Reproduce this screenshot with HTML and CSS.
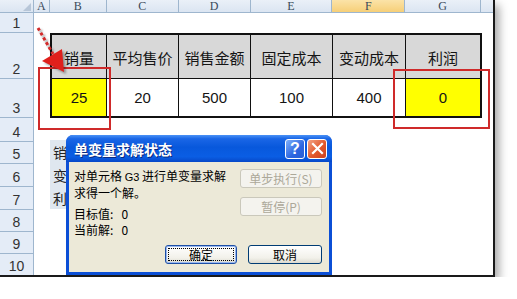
FILE: index.html
```html
<!DOCTYPE html>
<html lang="zh-CN">
<head>
    <meta charset="UTF-8">
    <meta name="viewport" content="width=device-width, initial-scale=1.0">
    <title>单变量求解状态</title>
    <link rel="stylesheet" href="styles.css">
</head>
<body>
    <div class="sheet">
        <div class="colbar">
            <div class="corner"><span class="tri"></span></div>
            <div class="col w-a">A</div>
            <div class="col w-b">B</div>
            <div class="col w-c">C</div>
            <div class="col w-d">D</div>
            <div class="col w-e">E</div>
            <div class="col w-f active">F</div>
            <div class="col w-g">G</div>
            <div class="col w-h"></div>
        </div>

        <div class="body">
            <div class="rowbar">
                <div class="rh h1">1</div>
                <div class="rh h2">2</div>
                <div class="rh h3">3</div>
                <div class="rh h4">4</div>
                <div class="rh h5">5</div>
                <div class="rh h6">6</div>
                <div class="rh h7">7</div>
                <div class="rh h8">8</div>
                <div class="rh h9">9</div>
                <div class="rh h10">10</div>
            </div>

            <div class="cells">
                <div class="data">
                    <div class="th">销量</div>
                    <div class="th">平均售价</div>
                    <div class="th">销售金额</div>
                    <div class="th">固定成本</div>
                    <div class="th">变动成本</div>
                    <div class="th last">利润</div>
                    <div class="td hl">25</div>
                    <div class="td">20</div>
                    <div class="td">500</div>
                    <div class="td">100</div>
                    <div class="td">400</div>
                    <div class="td hl last">0</div>
                </div>

                <div class="note">
                    <p>销</p>
                    <p>变</p>
                    <p>利</p>
                </div>
            </div>
        </div>

        <div class="mark mark-b"></div>
        <div class="mark mark-g"></div>

        <svg class="arrow" width="80" height="80" viewBox="0 0 80 80">
            <line x1="38" y1="28" x2="53" y2="54" stroke="#d22a2a" stroke-width="3" stroke-dasharray="3 2.5"/>
            <polygon points="64,72 42,61 62,49" fill="#e0201c"/>
        </svg>

        <div class="dialog">
            <div class="titlebar">
                <span class="title">单变量求解状态</span>
                <span class="tbtn help">?</span>
                <span class="tbtn close">
                    <svg width="13" height="13" viewBox="0 0 13 13"><path d="M2 2 L11 11 M11 2 L2 11" stroke="#fff" stroke-width="2.2" stroke-linecap="square"/></svg>
                </span>
            </div>
            <div class="dbody">
                <div class="dtop">
                    <div class="msg">
                        <p>对单元格 <span class="ref">G3</span> 进行单变量求解</p>
                        <p>求得一个解。</p>
                        <p class="val first">目标值:&nbsp;&nbsp; 0</p>
                        <p class="val">当前解:&nbsp;&nbsp; 0</p>
                    </div>
                    <div class="side">
                        <button class="btn" disabled>单步执行(S)</button>
                        <button class="btn" disabled>暂停(P)</button>
                    </div>
                </div>
                <div class="dfoot">
                    <button class="btn default">确定</button>
                    <button class="btn cancel">取消</button>
                </div>
            </div>
        </div>
    </div>
</body>
</html>
```

FILE: styles.css
```css
* {
    box-sizing: border-box;
}
body {
    margin: 0;
    background: #fff;
    font-family: "Liberation Sans", "Noto Sans CJK SC", sans-serif;
}
p {
    margin: 0;
}

.sheet {
    position: relative;
    width: 495px;
    height: 277px;
    background: #fff;
    border-right: 2px solid #1a1a1a;
    border-bottom: 2px solid #1a1a1a;
    box-shadow: 4px 5px 9px rgba(0, 0, 0, 0.35);
    overflow: hidden;
}

/* column headers */
.colbar {
    display: flex;
    height: 13px;
    background: linear-gradient(#eaf0f8, #dbe5f2);
    border-bottom: 1px solid #9eb6ce;
}
.corner {
    position: relative;
    width: 34px;
    border-right: 1px solid #9eb6ce;
}
.tri {
    position: absolute;
    right: 2px;
    bottom: 1px;
    width: 0;
    height: 0;
    border-left: 8px solid transparent;
    border-bottom: 8px solid #b7c6d8;
}
.col {
    border-right: 1px solid #9eb6ce;
    font-family: "Liberation Serif", serif;
    font-size: 12px;
    line-height: 12px;
    color: #3a4a5a;
    text-align: center;
}
.col.active {
    background: linear-gradient(#fbe3a8, #f6cf78);
}
.w-a { width: 16px; }
.w-b { width: 57px; }
.w-c { width: 72px; }
.w-d { width: 72px; }
.w-e { width: 82px; }
.w-f { width: 73px; }
.w-g { width: 76px; }
.w-h { width: 12px; border-right: none; }

/* row headers + cell area */
.body {
    display: flex;
}
.rowbar {
    width: 34px;
    background: #e4ecf7;
    border-right: 1px solid #9eb6ce;
}
.rh {
    display: flex;
    align-items: flex-end;
    justify-content: center;
    border-bottom: 1px solid #9eb6ce;
    font-size: 14px;
    line-height: 18px;
    color: #333;
}
.h1 { height: 20px; }
.h2 { height: 46px; }
.h3 { height: 39px; }
.h4 { height: 24px; }
.h5 { height: 22px; }
.h6 { height: 23px; }
.h7 { height: 23px; }
.h8 { height: 22px; }
.h9 { height: 22px; }
.h10 { height: 21px; border-bottom: none; }

.cells {
    position: relative;
    flex: 1;
    padding: 20px 0 0 16px;
}

.data {
    display: grid;
    grid-template-columns: 55px 72px 72px 82px 73px 74px;
    grid-template-rows: 44px 37px;
    width: 432px;
    border: 2px solid #111;
}
.th, .td {
    display: flex;
    align-items: center;
    justify-content: center;
    border-right: 1px solid #111;
    color: #151515;
}
.th {
    background: #d8d8d8;
    border-bottom: 1px solid #111;
    font-family: "Noto Sans CJK SC", sans-serif;
    font-size: 15px;
    padding-top: 2px;
}
.td {
    background: #fff;
    font-size: 15px;
}
.td.hl {
    background: #ffff00;
}
.last {
    border-right: none;
}

.note {
    position: absolute;
    left: 16px;
    top: 127px;
    width: 17px;
    height: 69px;
    padding: 1px 0 0 3px;
    background: #dfe7ef;
    font-family: "Noto Sans CJK SC", sans-serif;
    font-size: 14px;
    line-height: 23px;
    color: #222;
}

/* red highlight boxes and arrow */
.mark {
    position: absolute;
    border: 2px solid #cf2a2a;
}
.mark-b {
    left: 38px;
    top: 67px;
    width: 73px;
    height: 63px;
}
.mark-g {
    left: 393px;
    top: 69px;
    width: 97px;
    height: 60px;
}
.arrow {
    position: absolute;
    left: 0;
    top: 0;
    filter: drop-shadow(2px 2px 1px rgba(0, 0, 0, 0.35));
}

/* dialog */
.dialog {
    position: absolute;
    left: 66px;
    top: 135px;
    width: 266px;
    height: 140px;
    background: #0b4fd6;
    border-radius: 7px 7px 0 0;
    padding: 0 3px 3px;
    display: flex;
    flex-direction: column;
    font-family: "Noto Sans CJK SC", sans-serif;
}
.titlebar {
    height: 27px;
    margin: 0 -3px;
    padding: 0 5px 0 8px;
    display: flex;
    align-items: center;
    gap: 2px;
    border-radius: 7px 7px 0 0;
    background: linear-gradient(#4a92f6 0%, #1a66e6 14%, #0858dc 45%, #0a5ee4 80%, #0748c8 100%);
}
.title {
    flex: 1;
    color: #fff;
    font-size: 14px;
    font-weight: bold;
    text-shadow: 1px 1px 0 #0a2a80;
}
.tbtn {
    display: flex;
    align-items: center;
    justify-content: center;
    width: 20px;
    height: 20px;
    border: 1px solid #fff;
    border-radius: 3px;
    color: #fff;
}
.help {
    background: linear-gradient(135deg, #7fb0fb, #2d66e0 60%, #2a5fd4);
    font-family: "Liberation Sans", sans-serif;
    font-size: 16px;
    font-weight: bold;
}
.close {
    background: linear-gradient(135deg, #f3a385, #e2582c 55%, #cc4220);
}

.dbody {
    flex: 1;
    background: #ece9d8;
    padding: 6px 7px 8px 5px;
    display: flex;
    flex-direction: column;
    font-size: 12px;
    color: #000;
}
.dtop {
    display: flex;
    justify-content: space-between;
}
.msg p {
    line-height: 15px;
}
.msg .val {
    line-height: 16px;
}
.msg .first {
    margin-top: 6px;
}
.ref {
    font-family: "Liberation Sans", sans-serif;
    font-size: 11px;
}
.side {
    display: flex;
    flex-direction: column;
    gap: 9px;
    padding-top: 1px;
}
.btn {
    width: 82px;
    height: 19px;
    padding: 0;
    border: 1px solid #003c74;
    border-radius: 3px;
    background: linear-gradient(#ffffff, #f2f1ea 70%, #dcdad0);
    font-family: "Noto Sans CJK SC", sans-serif;
    font-size: 12px;
    color: #000;
}
.btn:disabled {
    border-color: #cac8bb;
    background: #f4f3ee;
    color: #aca899;
}
.dfoot {
    margin-top: auto;
    display: flex;
    justify-content: flex-end;
    gap: 11px;
}
.btn.default {
    width: 72px;
    border-color: #1d4fa6;
    box-shadow: inset 0 0 0 1px #9ab8ef;
    outline: 1px dotted #000;
    outline-offset: -4px;
}
.btn.cancel {
    width: 74px;
}
```
